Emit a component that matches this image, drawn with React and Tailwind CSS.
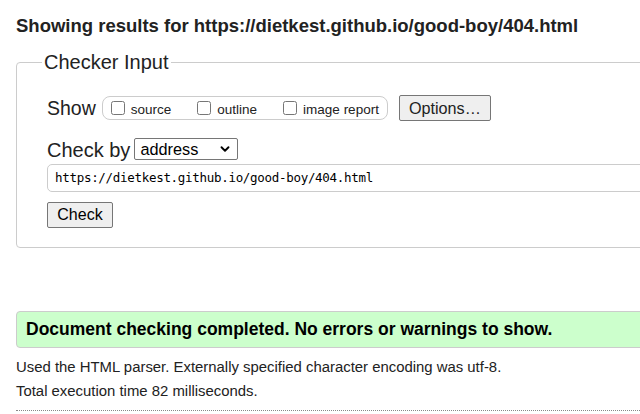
import React from 'react';
import { ChevronDown } from 'lucide-react';

export default function App() {
  return (
    <div className="w-[640px] h-[414px] overflow-hidden bg-white text-[#222] font-['Liberation_Sans',Arial,sans-serif]">
      <div className="w-[700px] pl-4">
        {/* Heading */}
        <h1 className="pt-[14px] text-[18.5px] leading-[24px] font-bold">
          Showing results for https://dietkest.github.io/good-boy/404.html
        </h1>

        {/* Checker Input */}
        <fieldset className="mt-[13px] border border-[#ccc] rounded-[4px] pl-[30px] pr-4 pb-[19px]">
          <legend className="ml-[-5px] px-[2px] text-[20px] leading-[22px] text-[#222]">Checker Input</legend>

          <div className="mt-[22px] flex items-center h-[26px]">
            <span className="text-[19.5px] leading-[22px]">Show</span>
            <div className="ml-[6px] h-[24px] flex items-center border border-[#ccc] rounded-[8px] pl-[8px] pr-[8px] text-[13.5px]">
              <label className="flex items-center">
                <input type="checkbox" className="w-[14px] h-[14px] m-0" />
                <span className="ml-[6px] mt-[4px]">source</span>
              </label>
              <label className="flex items-center ml-[26px]">
                <input type="checkbox" className="w-[14px] h-[14px] m-0" />
                <span className="ml-[6px] mt-[4px]">outline</span>
              </label>
              <label className="flex items-center ml-[26px]">
                <input type="checkbox" className="w-[14px] h-[14px] m-0" />
                <span className="ml-[6px] mt-[4px]">image report</span>
              </label>
            </div>
            <button className="ml-[11px] h-[26px] w-[92px] bg-[#efefef] border border-[#767676] rounded-[2px] text-[16.2px] leading-[20px]">
              Options…
            </button>
          </div>

          <div className="mt-[18px] flex items-center h-[22px]">
            <span className="text-[20px] leading-[22px]">Check by</span>
            <div className="relative ml-[4px]">
              <select className="appearance-none w-[104px] h-[22px] border border-[#767676] rounded-[2px] pl-[5px] text-[16.3px] leading-[18px] bg-white text-black">
                <option>address</option>
              </select>
              <ChevronDown size={14} strokeWidth={3.2} className="absolute right-[6px] top-[4px] pointer-events-none text-black" />
            </div>
          </div>

          <div className="mt-[3px] h-[28px] border border-[#ccc] rounded-[5px] flex items-center pl-[7px] font-['DejaVu_Sans_Mono',monospace] text-[12.5px] tracking-[-0.3px] text-black">
            https://dietkest.github.io/good-boy/404.html
          </div>

          <button className="block mt-[10px] h-[26px] w-[66px] bg-[#efefef] border border-[#767676] rounded-[2px] text-[16px] leading-[20px] text-black">
            Check
          </button>
        </fieldset>

        {/* Result */}
        <div className="mt-[63px] h-[37px] border border-[#ccc] rounded-[4px] bg-[#ccffcc] flex items-center pl-[9px] text-[17.5px] font-bold text-black">
          Document checking completed. No errors or warnings to show.
        </div>

        <p className="mt-[10px] text-[14.9px] leading-[18px]">
          Used the HTML parser. Externally specified character encoding was utf-8.
        </p>
        <p className="mt-[6px] text-[14.9px] leading-[18px]">Total execution time 82 milliseconds.</p>
        <div className="mt-[10px] border-t border-dotted border-[#888]" />
      </div>
    </div>
  );
}
